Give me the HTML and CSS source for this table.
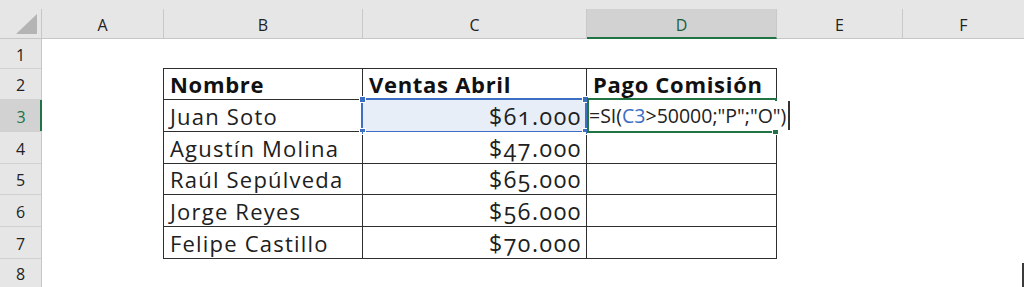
FILE: index.html
```html
<!DOCTYPE html>
<html lang="es">
<head>
<meta charset="utf-8">
<title>Hoja de cálculo</title>
<link rel="stylesheet" href="styles.css">
</head>
<body>
<div class="sheet">
  <div class="colhdr">
    <div class="corner"><span class="tri"></span></div>
    <div class="ch col-a">A</div>
    <div class="ch col-b">B</div>
    <div class="ch col-c">C</div>
    <div class="ch col-d sel">D</div>
    <div class="ch col-e">E</div>
    <div class="ch col-f">F</div>
  </div>
  <div class="body">
    <div class="rowhdr">
      <div class="rh r1">1</div>
      <div class="rh r2">2</div>
      <div class="rh r3 sel">3</div>
      <div class="rh r4">4</div>
      <div class="rh r5">5</div>
      <div class="rh r6">6</div>
      <div class="rh r7">7</div>
      <div class="rh r8">8</div>
    </div>
    <div class="cells">
      <div class="table">
        <div class="cell head">Nombre</div>
        <div class="cell head">Ventas Abril</div>
        <div class="cell head">Pago Comisión</div>

        <div class="cell">Juan Soto</div>
        <div class="cell num ref">$61.000<span class="refbox"><i class="hd tl"></i><i class="hd tr"></i><i class="hd bl"></i><i class="hd br"></i></span></div>
        <div class="cell edit"><span class="activebox"><i class="hd gbr"></i></span><span class="formula">=SI(<span class="fref">C3</span>&gt;50000;"P";"O")</span></div>

        <div class="cell">Agustín Molina</div>
        <div class="cell num">$47.000</div>
        <div class="cell"></div>

        <div class="cell">Raúl Sepúlveda</div>
        <div class="cell num">$65.000</div>
        <div class="cell"></div>

        <div class="cell">Jorge Reyes</div>
        <div class="cell num">$56.000</div>
        <div class="cell"></div>

        <div class="cell">Felipe Castillo</div>
        <div class="cell num">$70.000</div>
        <div class="cell"></div>
      </div>
    </div>
  </div>
  <div class="edge"></div>
</div>
</body>
</html>
```

FILE: styles.css
```css
html, body {
  margin: 0;
  padding: 0;
  background: #ffffff;
}

.sheet {
  position: relative;
  width: 1024px;
  height: 287px;
  overflow: hidden;
  font-family: "Open Sans", "Noto Sans", sans-serif;
  color: #1f1f1f;
}

/* ---------- column header ---------- */
.colhdr {
  display: flex;
  height: 39px;
  box-sizing: border-box;
  padding-top: 9px;
  background: #e6e6e6;
  border-bottom: 1px solid #c6c6c6;
}

.corner {
  position: relative;
  width: 42px;
  flex: none;
  box-sizing: border-box;
  border-right: 1px solid #c6c6c6;
}

.tri {
  position: absolute;
  right: 4px;
  bottom: 4px;
  width: 21px;
  height: 20px;
  background: #b4b4b4;
  clip-path: polygon(100% 0, 100% 100%, 0 100%);
}

.ch {
  flex: none;
  box-sizing: border-box;
  border-right: 1px solid #c9c9c9;
  display: flex;
  align-items: center;
  justify-content: center;
  padding-top: 3px;
  font-size: 16px;
  color: #222222;
}

.col-a { width: 122px; }
.col-b { width: 199px; }
.col-c { width: 224px; }
.col-d { width: 190px; }
.col-e { width: 126px; }
.col-f { flex: 1; border-right: none; }

.ch.sel {
  background: #d2d2d2;
  border-bottom: 2px solid #217346;
  margin-bottom: -1px;
  color: #1c5e39;
}

/* ---------- body ---------- */
.body {
  display: flex;
}

.rowhdr {
  width: 42px;
  flex: none;
  box-sizing: border-box;
  border-right: 1px solid #c6c6c6;
  background: #e6e6e6;
  display: flex;
  flex-direction: column;
  height: 248px;
}

.rh {
  box-sizing: border-box;
  border-bottom: 1px solid #d0d0d0;
  display: flex;
  align-items: center;
  justify-content: center;
  font-size: 16px;
  color: #222222;
  padding-top: 2px;
}

.r1 { height: 30px; }
.r2 { height: 31px; }
.r3 { height: 32px; }
.r4 { height: 32px; }
.r5 { height: 31px; }
.r6 { height: 32px; }
.r7 { height: 32px; }
.r8 { flex: 1; border-bottom: none; }

.rh.sel {
  background: #d2d2d2;
  color: #217346;
  box-shadow: inset -2px 0 0 #217346;
  margin-right: -1px;
}

.cells {
  flex: 1;
  padding-left: 121px;
  padding-top: 29px;
}

/* ---------- table ---------- */
.table {
  display: grid;
  grid-template-columns: 198px 223px 189px;
  grid-template-rows: 30px 31px 31px 30px 31px 31px;
  gap: 1px;
  width: max-content;
  background: #2e2e2e;
  border: 1px solid #2e2e2e;
}

.cell {
  position: relative;
  background: #ffffff;
  display: flex;
  align-items: flex-end;
  padding: 0 6px 1px 6px;
  font-size: 22px;
  letter-spacing: 1.2px;
  line-height: 28px;
  white-space: nowrap;
  color: #202020;
  font-variant-numeric: oldstyle-nums;
}

.cell.head {
  font-weight: 700;
  letter-spacing: 0.7px;
  color: #111111;
}

.cell.num {
  justify-content: flex-end;
  font-size: 23px;
  letter-spacing: 1.6px;
  padding-right: 4px;
}

.cell.ref {
  background: #e8eef8;
}

.refbox {
  position: absolute;
  left: -2px;
  top: -2px;
  right: -1px;
  bottom: -2px;
  border: 2px solid #3c6fc4;
}

.hd {
  position: absolute;
  width: 5px;
  height: 5px;
  background: #3c6fc4;
  border: 1px solid #ffffff;
}

.tl { left: -4px; top: -4px; }
.tr { right: -4px; top: -4px; }
.bl { left: -4px; bottom: -4px; }
.br { right: -4px; bottom: -4px; }

.edit {
  z-index: 2;
  padding-left: 2px;
}

.activebox {
  position: absolute;
  left: 0;
  top: -2px;
  right: -1px;
  bottom: -2px;
  border: 2px solid #217346;
}

.gbr {
  right: -4px;
  bottom: -4px;
  background: #217346;
}

.formula {
  position: relative;
  z-index: 3;
  background: #ffffff;
  font-family: "Open Sans", sans-serif;
  font-size: 19.5px;
  letter-spacing: 0;
  color: #222222;
  padding-right: 2px;
  line-height: 28px;
  height: 29px;
  display: flex;
  align-items: flex-end;
  border-right: 2px solid #333333;
  font-variant-numeric: lining-nums;
}

.fref {
  color: #3c6fc4;
}

.edge {
  position: absolute;
  right: 0;
  top: 263px;
  width: 2px;
  height: 24px;
  background: #3a3a3a;
}
```
